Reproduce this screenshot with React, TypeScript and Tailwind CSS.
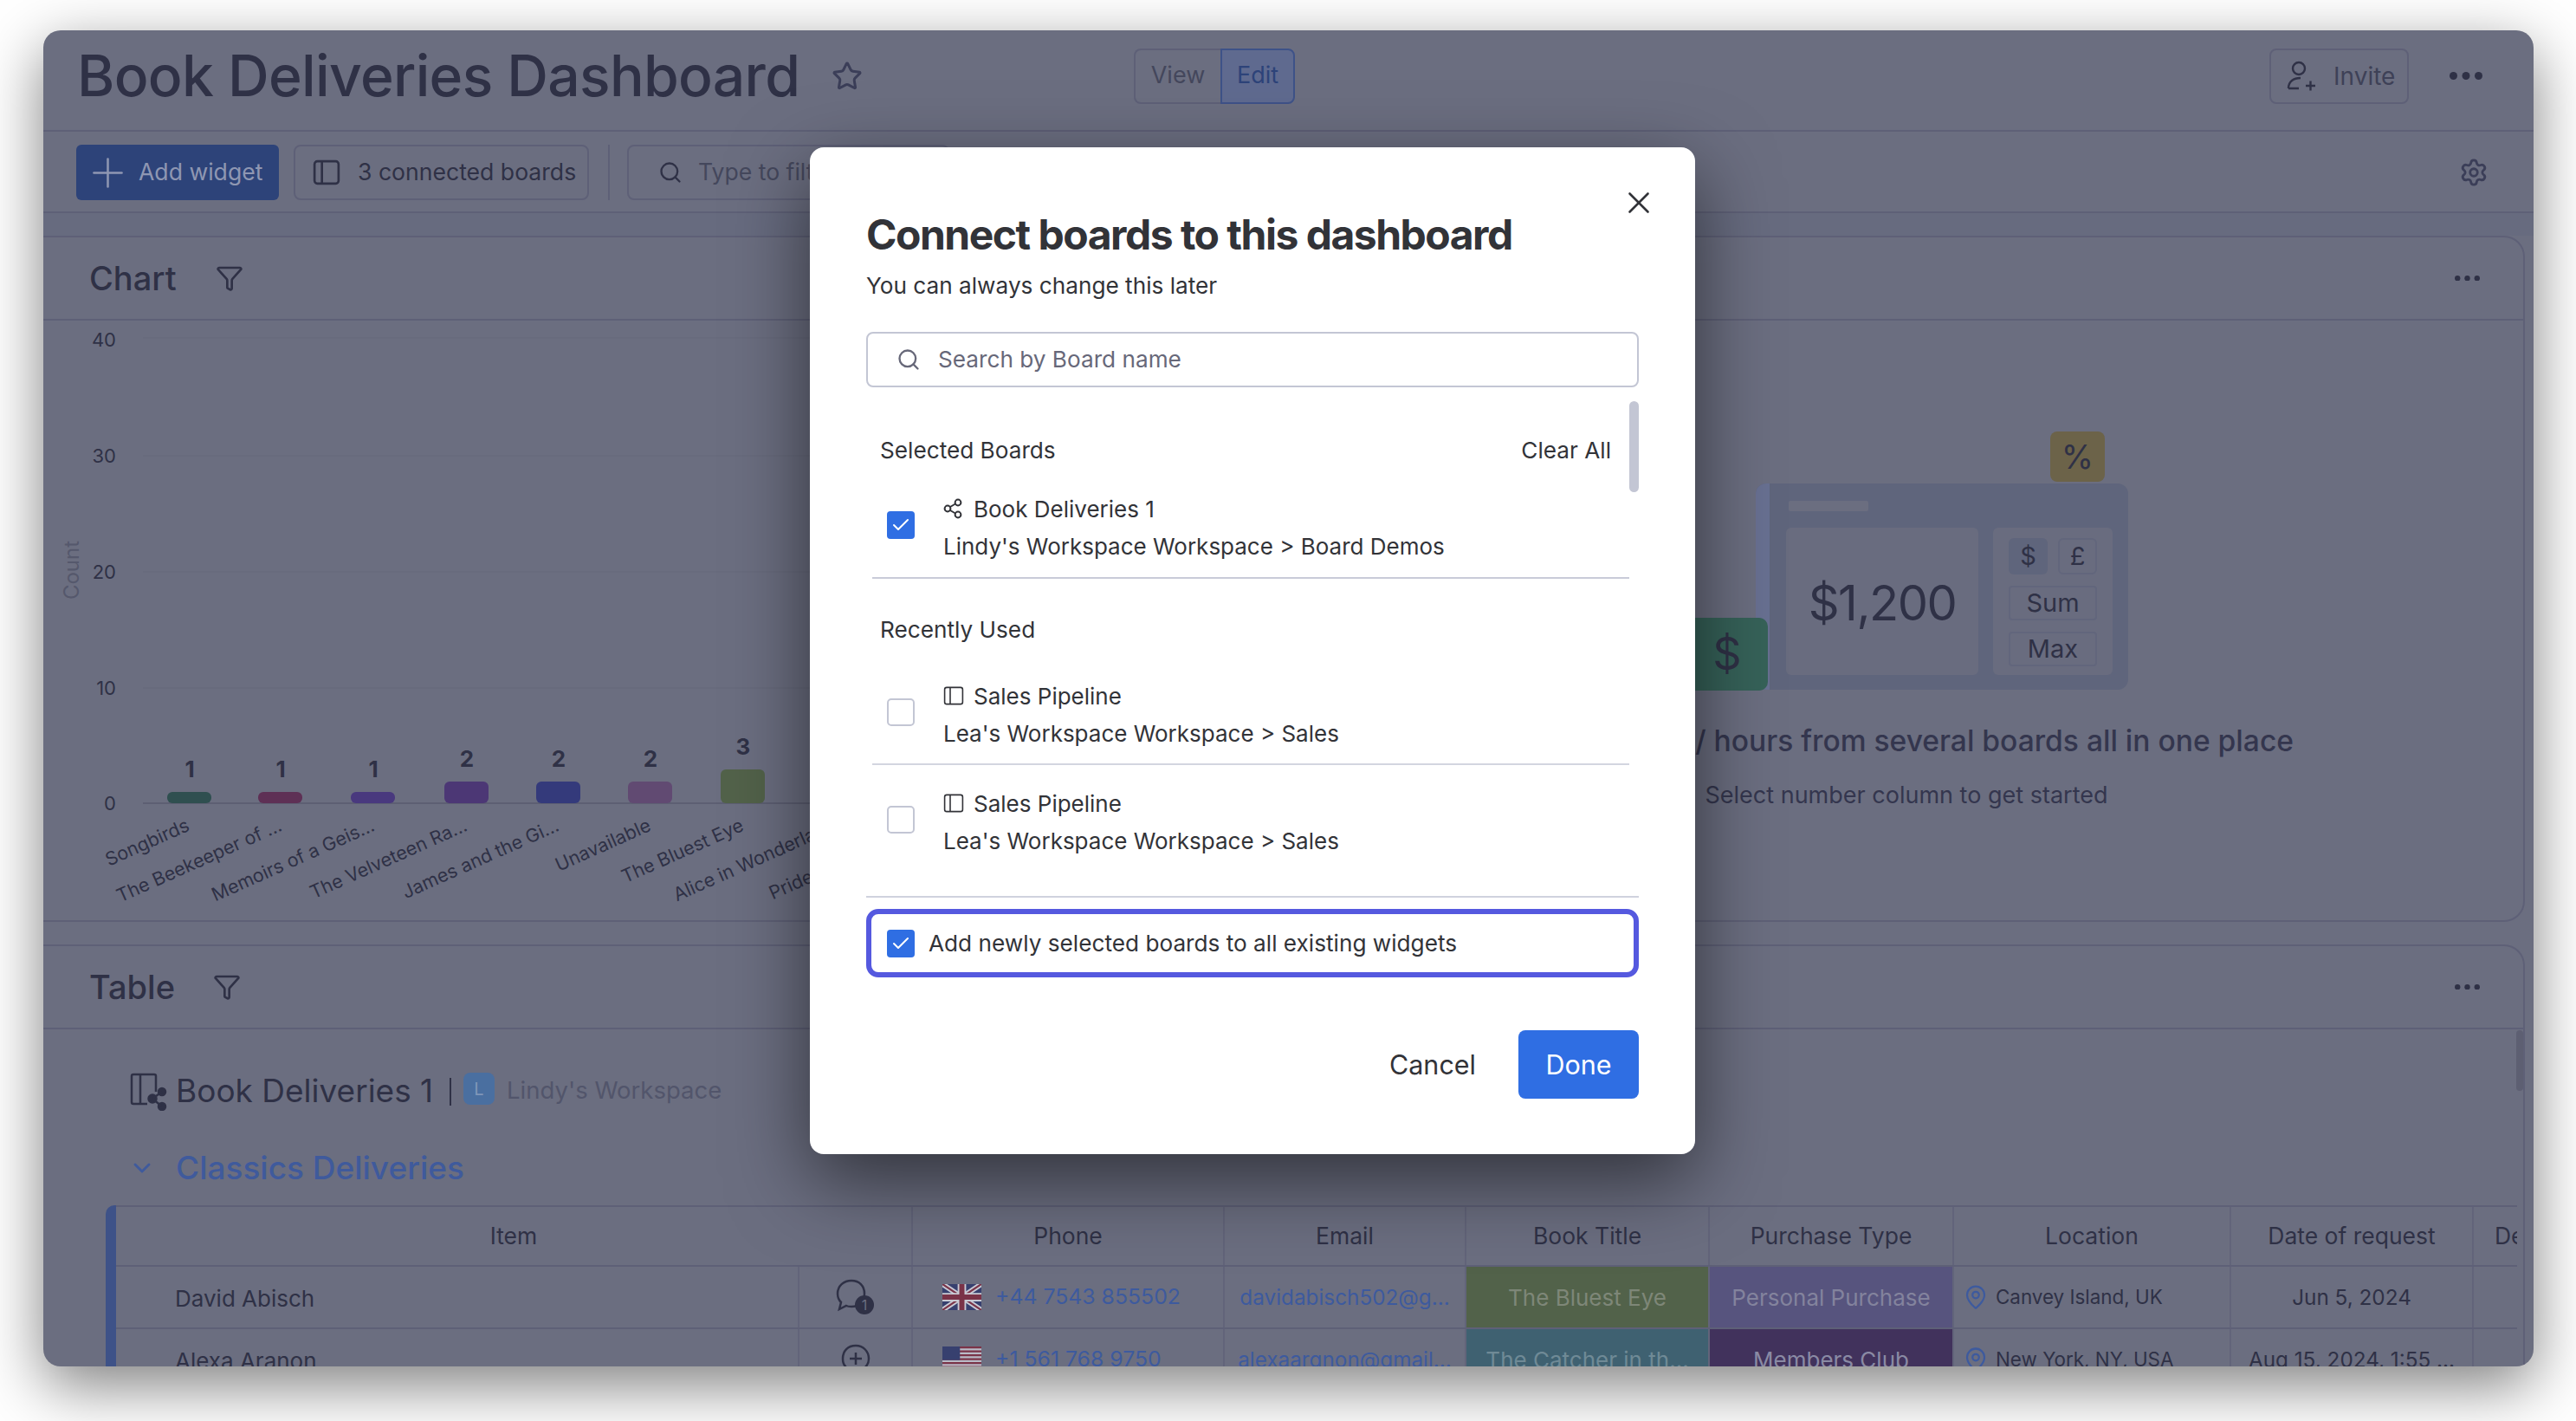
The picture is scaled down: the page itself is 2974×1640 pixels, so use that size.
import React from "react";
import { Star, Plus, Search, Funnel, Settings, X, Check, ChevronDown, MapPin } from "lucide-react";

const bars = [
  { x: 193, h: 13, c: "#2f4f50", n: 1, l: "Songbirds", e: 220 },
  { x: 298, h: 13, c: "#5e3055", n: 1, l: "The Beekeeper of ...", e: 327 },
  { x: 405, h: 13, c: "#49397e", n: 1, l: "Memoirs of a Geis...", e: 434 },
  { x: 513, h: 25, c: "#4c3775", n: 2, l: "The Velveteen Ra...", e: 541 },
  { x: 619, h: 25, c: "#343a7b", n: 2, l: "James and the Gi...", e: 647 },
  { x: 725, h: 25, c: "#614a72", n: 2, l: "Unavailable", e: 753 },
  { x: 832, h: 39, c: "#52624a", n: 3, l: "The Bluest Eye", e: 860 },
  { x: 938, h: 39, c: "#52624a", n: 0, l: "Alice in Wonderland", e: 967 },
  { x: 1044, h: 39, c: "#52624a", n: 0, l: "Pride and Prejudice", e: 1073 },
];

function Dots({ w, r, className }: { w: number; r: number; className?: string }) {
  return (
    <svg width={w} height={r * 2} viewBox={`0 0 ${w} ${r * 2}`} fill="#2f3146" className={className}>
      <circle cx={r} cy={r} r={r} />
      <circle cx={w / 2} cy={r} r={r} />
      <circle cx={w - r} cy={r} r={r} />
    </svg>
  );
}

function Chart() {
  return (
    <svg viewBox="50 370 1521 694" className="w-[1521px] h-[694px] block">
      {[390, 526, 660, 794].map((y) => (
        <line key={y} x1="165" x2="1545" y1={y} y2={y} stroke="#66687b" strokeWidth="1" />
      ))}
      <line x1="165" x2="1545" y1="927" y2="927" stroke="#5d5f73" strokeWidth="2" />
      {[["40", 392], ["30", 526], ["20", 660], ["10", 794], ["0", 927]].map(([t, y]) => (
        <text key={t} x="134" y={Number(y) + 8} textAnchor="end" fontSize="22" fill="#2f3146" fontFamily="Inter, sans-serif">{t}</text>
      ))}
      <text transform="translate(91 658) rotate(-90)" textAnchor="middle" fontSize="24" fill="#55586c" fontFamily="Inter, sans-serif">Count</text>
      {bars.map((b) => (
        <g key={b.x}>
          {b.n > 0 && <rect x={b.x} y={927 - b.h} width="51" height={b.h} rx="6" fill={b.c} />}
          {b.n > 0 && (
            <text x={b.x + 26} y={927 - b.h - 17} textAnchor="middle" fontSize="26" fontWeight="700" fill="#2f3146" fontFamily="Inter, sans-serif">{b.n}</text>
          )}
          <text transform={`translate(${b.e} 958) rotate(-24)`} textAnchor="end" fontSize="21.5" fill="#2f3146" fontFamily="Inter, sans-serif">{b.l}</text>
        </g>
      ))}
    </svg>
  );
}

function PanelIcon({ size = 32, sw = 2.5, color = "#2f3146" }: { size?: number; sw?: number; color?: string }) {
  return (
    <svg width={size} height={size} viewBox="0 0 30 30" fill="none" stroke={color} strokeWidth={sw} className="shrink-0">
      <rect x="2" y="3" width="26" height="24" rx="3" />
      <line x1="10" x2="10" y1="3" y2="27" />
    </svg>
  );
}

function ShareIcon() {
  return (
    <svg width="24" height="24" viewBox="0 0 24 24" fill="none" stroke="#323338" strokeWidth="2" className="shrink-0">
      <circle cx="5" cy="12" r="3.4" />
      <circle cx="17" cy="5" r="3.4" />
      <circle cx="17" cy="19" r="3.4" />
      <line x1="8" y1="10" x2="14" y2="6.5" />
      <line x1="8" y1="14" x2="14" y2="17.5" />
    </svg>
  );
}

function UK() {
  return (
    <svg width="45" height="30" viewBox="0 0 60 40" className="shrink-0">
      <rect width="60" height="40" fill="#37406f" />
      <path d="M0 0L60 40M60 0L0 40" stroke="#c9cad4" strokeWidth="8" />
      <path d="M0 0L60 40M60 0L0 40" stroke="#7a3348" strokeWidth="3" />
      <path d="M30 0V40M0 20H60" stroke="#c9cad4" strokeWidth="13" />
      <path d="M30 0V40M0 20H60" stroke="#7a3348" strokeWidth="8" />
    </svg>
  );
}

function US() {
  return (
    <svg width="45" height="30" viewBox="0 0 60 40" className="shrink-0">
      <rect width="60" height="40" fill="#b9bac6" />
      {[0, 6, 12, 18, 24, 30, 36].map((y) => (
        <rect key={y} y={y} width="60" height="3" fill="#7a3348" />
      ))}
      <rect width="27" height="21" fill="#37406f" />
    </svg>
  );
}

function ModalRow({ share, title, sub, checked }: { share?: boolean; title: string; sub: string; checked?: boolean }) {
  return (
    <div className="flex items-start pl-[17px] h-[86px]">
      <div className="mt-[25px] shrink-0">
        {checked ? <CheckedBox /> : <div className="w-[32px] h-[32px] rounded-[5px] border-2 border-[#c3c6d4]" />}
      </div>
      <div className="ml-[33px] mt-[11px] flex flex-col justify-between h-[65px] text-[#323338] text-[26px]">
        <div className="flex items-center h-[22px] gap-[11px]">
          {share ? <ShareIcon /> : <PanelIcon size={24} sw={2} color="#323338" />}
          <span>{title}</span>
        </div>
        <div className="h-[22px] flex items-center">{sub}</div>
      </div>
    </div>
  );
}

function CheckedBox() {
  return (
    <div className="w-[32px] h-[32px] rounded-[4px] bg-[#2f6ee3] flex items-center justify-center shrink-0">
      <Check size={24} color="#ffffff" strokeWidth={2} />
    </div>
  );
}

function Modal() {
  return (
    <div className="absolute left-[885px] top-[135px] w-[1022px] h-[1162px] bg-white rounded-[16px] shadow-[0_30px_90px_rgba(0,0,0,0.55)] px-[65px] text-[26.2px] text-[#323338] [font-family:Inter,sans-serif]">
      <X size={42} strokeWidth={1.5} color="#323338" className="absolute right-[44px] top-[43px]" />
      <h2 className="pt-[75px] h-[130px] text-[48px] leading-[52px] font-bold tracking-[-1.5px] text-[#323338] whitespace-nowrap">Connect boards to this dashboard</h2>
      <p className="mt-[13px] h-[34px] leading-[34px]">You can always change this later</p>
      <div className="mt-[36px] h-[64px] rounded-[8px] border-2 border-[#c3c6d4] flex items-center pl-[33px] gap-[20px] text-[#676879]">
        <Search size={28} strokeWidth={2} color="#676879" />
        <span>Search by Board name</span>
      </div>
      <div className="relative h-[587px] pt-[57px]">
        <div className="absolute right-0 top-[16px] w-[11px] h-[105px] rounded-full bg-[#c3c6d4]" />
        <div className="flex justify-between pl-[16px] pr-[32px] h-[32px] items-center">
          <span>Selected Boards</span>
          <span>Clear All</span>
        </div>
        <div className="mt-[29px] mr-[11px] ml-[7px] border-b-2 border-[#c9cbd9] pb-[15px]">
          <ModalRow share title="Book Deliveries 1" sub="Lindy's Workspace Workspace > Board Demos" checked />
        </div>
        <div className="pl-[16px] mt-[43px] h-[32px] flex items-center">Recently Used</div>
        <div className="mt-[38px] mr-[11px] ml-[7px] border-b-2 border-[#d3d5e0] pb-[14px]">
          <ModalRow title="Sales Pipeline" sub="Lea's Workspace Workspace > Sales" />
        </div>
        <div className="mt-[22px] mr-[11px] ml-[7px]">
          <ModalRow title="Sales Pipeline" sub="Lea's Workspace Workspace > Sales" />
        </div>
      </div>
      <div className="border-t-2 border-[#d0d2de] pt-[13px]">
        <div className="h-[79px] rounded-[14px] border-[6px] border-[#5559df] flex items-center pl-[18px] gap-[16px]">
          <CheckedBox />
          <span>Add newly selected boards to all existing widgets</span>
        </div>
      </div>
      <div className="mt-[61px] flex items-center justify-end text-[30.5px]">
        <span className="text-[#323338]">Cancel</span>
        <div className="ml-[49px] w-[139px] h-[79px] rounded-[8px] bg-[#2f6ee3] text-white flex items-center justify-center">Done</div>
      </div>
    </div>
  );
}

function Illustration() {
  return (
    <div className="relative w-[430px] h-[238px] rounded-[12px] bg-[#5f657c] text-[#2f3146]">
      <div className="absolute left-0 top-0 w-[16px] h-full rounded-l-[12px] bg-[#687091]" />
      <div className="absolute left-[38px] top-[20px] w-[92px] h-[12px] rounded-[2px] bg-[#6b6e80]" />
      <div className="absolute -top-[60px] left-[340px] w-[63px] h-[58px] rounded-[8px] bg-[#6c6349] flex items-center justify-center text-[38px]">%</div>
      <div className="absolute -left-[80px] top-[155px] w-[94px] h-[84px] rounded-[10px] bg-[#366259] flex items-center justify-center text-[52px]">$</div>
      <div className="absolute left-[35px] top-[51px] w-[222px] h-[170px] rounded-[6px] bg-[#696c7f] flex items-center justify-center pt-[4px] text-[56px] tracking-[-1.5px]">$1,200</div>
      <div className="absolute left-[274px] top-[51px] w-[138px] h-[170px] rounded-[6px] bg-[#696c7f] px-[18px] pt-[12px] flex flex-col gap-[13px] text-[29px]">
        <div className="flex justify-between">
          <div className="w-[45px] h-[42px] rounded-[6px] bg-[#5f657c] flex items-center justify-center">$</div>
          <div className="w-[45px] h-[42px] rounded-[6px] border-2 border-[#62667c] flex items-center justify-center">£</div>
        </div>
        <div className="h-[40px] rounded-[4px] border-2 border-[#62667c] flex items-center justify-center">Sum</div>
        <div className="h-[40px] rounded-[4px] border-2 border-[#62667c] flex items-center justify-center">Max</div>
      </div>
    </div>
  );
}

const cols = [
  { w: 920, h: "Item" },
  { w: 360, h: "Phone" },
  { w: 279, h: "Email" },
  { w: 281, h: "Book Title" },
  { w: 282, h: "Purchase Type" },
  { w: 320, h: "Location" },
  { w: 280, h: "Date of request" },
  { w: 120, h: "Delivery" },
];

function TableRow({ name, plus, flag, phone, email, book, bookBg, bookFg, type, typeBg, typeFg, loc, date }: {
  name: string; plus?: boolean; flag: React.ReactNode; phone: string; email: string; book: string; bookBg: string; bookFg: string; type: string; typeBg: string; typeFg: string; loc: string; date: string;
}) {
  const cell = "h-full flex items-center border-r-2 border-[#62647a] shrink-0";
  return (
    <div className="flex h-[72px] border-b-2 border-[#5e6077] text-[26px] text-[#2f3146]">
      <div className={`${cell} w-[789px] pl-[68px] pt-[2px]`}>{name}</div>
      <div className={`${cell} w-[131px] justify-center`}>
        {plus ? (
          <svg width="40" height="40" viewBox="0 0 40 40" fill="none" stroke="#2f3146" strokeWidth="2.5">
            <path d="M20 4C11 4 5 10 5 19c0 4 1 7 3 9l-1 7 7-3c2 1 4 1 6 1 9 0 15-6 15-14S29 4 20 4z" />
            <path d="M20 12v14M13 19h14" />
          </svg>
        ) : (
          <svg width="50" height="44" viewBox="0 0 50 44" fill="none" stroke="#2f3146" strokeWidth="2.5">
            <path d="M20 3C11 3 4 9 4 18c0 4 2 8 4 10l-2 8 8-4c2 1 4 1 6 1 9 0 15-6 15-15S29 3 20 3z" />
            <circle cx="35" cy="31" r="11" fill="#2f3146" stroke="none" />
            <text x="35" y="37" textAnchor="middle" fontSize="16" fill="#6b6e80" stroke="none" fontFamily="Inter, sans-serif">1</text>
          </svg>
        )}
      </div>
      <div className={`${cell} w-[360px] pl-[34px] gap-[16px] text-[24.8px] text-[#3d5a9e]`}>{flag}<span>{phone}</span></div>
      <div className={`${cell} w-[279px] justify-center text-[24.3px] text-[#3d5a9e]`}><span>{email}</span></div>
      <div className={`${cell} w-[281px] justify-center`} style={{ background: bookBg, color: bookFg }}>{book}</div>
      <div className={`${cell} w-[282px] justify-center`} style={{ background: typeBg, color: typeFg }}>{type}</div>
      <div className={`${cell} w-[320px] pl-[10px] gap-[8px] text-[22.4px]`}>
        <MapPin size={30} color="#3d5a9e" strokeWidth={1.8} />
        <span>{loc}</span>
      </div>
      <div className={`${cell} w-[280px] justify-center text-[24.3px]`}>{date}</div>
      <div className="h-full w-[120px] shrink-0" />
    </div>
  );
}

function TableCard() {
  return (
    <div className="mr-[10px] mt-[26px] border-t-2 border-r-2 border-[#5e6077] rounded-tr-[24px] relative flex-1 min-h-0 overflow-hidden">
      <div className="h-[96px] border-b-2 border-[#5e6077] flex items-center pl-[53px] pr-[50px] text-[#2f3146]">
        <span className="text-[38px] font-medium leading-none w-[143px]">Table</span>
        <Funnel size={32} strokeWidth={2} color="#2f3146" />
        <Dots w={29} r={3.2} className="ml-auto" />
      </div>
      <div className="absolute right-0 top-[97px] w-[8px] h-[70px] rounded-full bg-[#5d5f72]" />
      <div className="pl-[100px] pt-[50px] h-[138px] flex items-start text-[#2f3146]">
        <svg width="44" height="44" viewBox="0 0 44 44" fill="none" stroke="#2f3146" strokeWidth="2.5" className="shrink-0">
          <path d="M30 22V4a2 2 0 0 0-2-2H4a2 2 0 0 0-2 2v30a2 2 0 0 0 2 2h16" />
          <line x1="12" x2="12" y1="2" y2="36" />
          <circle cx="37" cy="22" r="4" fill="#2f3146" />
          <circle cx="26" cy="30" r="4.5" fill="#2f3146" />
          <circle cx="37" cy="39" r="4" fill="#2f3146" />
          <path d="M26 30l11-8M26 30l11 9" />
        </svg>
        <span className="ml-[9px] text-[37px] leading-[42px] whitespace-nowrap w-[316px]">Book Deliveries 1</span>
        <span className="w-[2px] h-[32px] mt-[6px] bg-[#2f3146]" />
        <div className="ml-[14px] w-[36px] h-[37px] rounded-[8px] bg-[#4a6fa0] flex items-center justify-center text-[20px] text-[#7f96b8]">L</div>
        <span className="ml-[14px] text-[27.500px] leading-[40px] text-[#52556b]">Lindy's Workspace</span>
      </div>
      <div className="pl-[98px] h-[44px] flex items-center gap-[23px] text-[#3f5a9c]">
        <ChevronDown size={32} strokeWidth={2.2} color="#3f5a9c" />
        <span className="text-[37px] font-medium">Classics Deliveries</span>
      </div>
      <div className="ml-[72px] mt-[21px] w-[2784px] overflow-hidden flex rounded-tl-[10px]">
        <div className="w-[12px] shrink-0 bg-[#3e5288]" />
        <div className="w-[2772px] shrink-0 overflow-hidden">
          <div className="flex h-[71px] border-t-2 border-b-2 border-[#5e6077] text-[26.5px] text-[#2f3146]">
            {cols.map((c, i) => (
              <div key={c.h} style={{ width: c.w }} className={`h-full shrink-0 flex items-center ${i < 7 ? "justify-center border-r-2 border-[#62647a]" : "pl-[24px]"}`}>
                {c.h}
              </div>
            ))}
          </div>
          <TableRow name="David Abisch" flag={<UK />} phone="+44 7543 855502" email="davidabisch502@g..." book="The Bluest Eye" bookBg="#52624a" bookFg="#7e8778" type="Personal Purchase" typeBg="#57547e" typeFg="#83839d" loc="Canvey Island, UK" date="Jun 5, 2024" />
          <TableRow name="Alexa Aranon" plus flag={<US />} phone="+1 561 768 9750" email="alexaargnon@gmail..." book="The Catcher in th..." bookBg="#3f6171" bookFg="#6f8a96" type="Members Club" typeBg="#41325c" typeFg="#8a8aa4" loc="New York, NY, USA" date="Aug 15, 2024, 1:55 ..." />
        </div>
      </div>
    </div>
  );
}

export default function App() {
  return (
    <div className="w-[2974px] h-[1640px] bg-white pt-[35px] pl-[50px] overflow-hidden [font-family:Inter,sans-serif]">
      <div className="relative w-[2875px] h-[1542px] rounded-[20px] bg-[#6b6e80] shadow-[0_22px_70px_rgba(0,0,0,0.5)] overflow-hidden flex flex-col text-[#2f3146]">
        <header className="h-[117px] shrink-0 border-b-2 border-[#5e6077] flex items-center pl-[39px] pr-[59px] pb-[10px]">
          <h1 className="w-[871px] text-[66px] font-medium tracking-[-0.7px] whitespace-nowrap text-[#2f3146]">Book Deliveries Dashboard</h1>
          <Star size={36} strokeWidth={2} color="#3b3e58" />
          <div className="ml-[313px] flex h-[64px] text-[27px]">
            <div className="w-[100px] border-2 border-[#5e6077] border-r-0 rounded-l-[8px] flex items-center justify-center text-[#44475c]">View</div>
            <div className="w-[86px] border-2 border-[#3e5288] rounded-r-[8px] bg-[#5f6a8f] flex items-center justify-center text-[#2d4379]">Edit</div>
          </div>
          <div className="ml-auto w-[161px] h-[64px] rounded-[8px] border-2 border-[#5e6077] flex items-center pl-[18px] gap-[20px] text-[28px] text-[#3e4157]">
            <svg width="34" height="36" viewBox="0 0 34 36" fill="none" stroke="#2f3146" strokeWidth="2.4" className="shrink-0">
              <circle cx="14" cy="9" r="7" />
              <path d="M2 32c0-8 6-12 14-12M2 32h12M22 29h11M27.500 23.500v11" />
            </svg>
            <span>Invite</span>
          </div>
          <Dots w={38} r={4.5} className="ml-[47px]" />
        </header>
        <div className="h-[94px] shrink-0 border-b-2 border-[#5e6077] flex items-center pl-[38px] pr-[52px] pt-[2px] text-[26.6px]">
          <div className="w-[234px] h-[64px] rounded-[6px] bg-[#2d4379] flex items-center pl-[9px] gap-[8px] text-[#8f97b2]">
            <Plus size={55} strokeWidth={1.1} color="#8f97b2" />
            <span>Add widget</span>
          </div>
          <div className="ml-[17px] w-[341px] h-[64px] rounded-[8px] border-2 border-[#5e6077] flex items-center pl-[20px] gap-[20px] text-[#2f3146]">
            <PanelIcon />
            <span>3 connected boards</span>
          </div>
          <div className="ml-[22px] w-[2px] h-[64px] bg-[#5e6077]" />
          <div className="ml-[20px] w-[372px] h-[64px] rounded-[8px] border-2 border-[#5e6077] flex items-center pl-[34px] gap-[18px] text-[#44475c]">
            <Search size={28} strokeWidth={2} color="#2f3146" />
            <span>Type to filter</span>
          </div>
          <Settings size={34} strokeWidth={2} color="#3b3e58" className="ml-auto" />
        </div>
        <div className="h-[26px] shrink-0 bg-[#676b7f]" />
        <div className="h-[792px] shrink-0 flex mr-[10px]">
          <div className="w-[1521px] shrink-0 border-t-2 border-[#5e6077] border-b-2 overflow-hidden">
            <div className="h-[96px] border-b-2 border-[#5e6077] flex items-center pl-[53px]">
              <span className="text-[38px] font-medium leading-none w-[146px]">Chart</span>
              <Funnel size={32} strokeWidth={2} color="#2f3146" />
            </div>
            <Chart />
          </div>
          <div className="flex-1 border-t-2 border-r-2 border-b-2 border-[#5e6077] rounded-tr-[24px] rounded-br-[24px] flex flex-col">
            <div className="h-[96px] shrink-0 border-b-2 border-[#5e6077] flex items-center justify-end pr-[50px]">
              <Dots w={29} r={3.2} />
            </div>
            <div className="flex flex-col items-center pt-[188px]">
              <Illustration />
              <div className="mt-[36px] pr-[82px] text-[33.6px] font-medium leading-[46px] text-[#34364e] whitespace-nowrap">Sum budget / hours from several boards all in one place</div>
              <div className="mt-[22px] pr-[82px] text-[27px] leading-[36px] text-[#34364e] whitespace-nowrap">Select number column to get started</div>
            </div>
          </div>
        </div>
        <TableCard />
        <Modal />
      </div>
    </div>
  );
}
